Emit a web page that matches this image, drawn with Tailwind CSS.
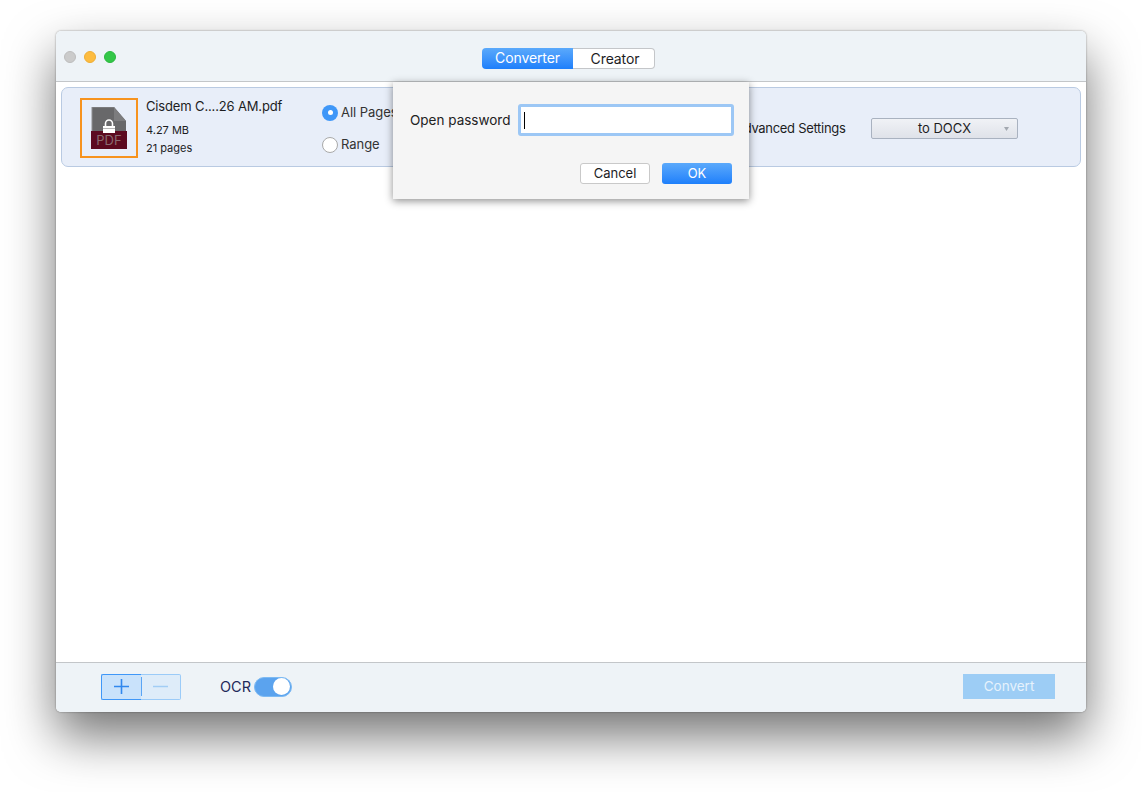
<!DOCTYPE html>
<html lang="en">
<head>
    <meta charset="UTF-8">
    <title>PDF Converter</title>
    <script src="https://cdn.jsdelivr.net/npm/@tailwindcss/browser@4"></script>
</head>
<body class="bg-white w-[1142px] h-[792px] overflow-hidden relative font-['Inter','Liberation_Sans',sans-serif] text-[#1d1d1f]">
    <!-- window -->
    <div class="absolute left-[56px] top-[31px] w-[1030px] h-[681px] flex flex-col rounded-[5px] bg-white overflow-hidden shadow-[0_24px_50px_rgba(0,0,0,0.55),0_0_2px_rgba(0,0,0,0.45)]">
        <!-- title bar -->
        <div class="h-[51px] shrink-0 bg-[#eef3f7] border-b border-[#c3c6c9] relative flex items-start justify-center pt-[17px] pr-[6px]">
            <div class="absolute left-[8px] top-[20px] flex gap-[8px]">
                <span class="w-[12px] h-[12px] rounded-full bg-[#cbcbcb] border border-[#bdbdbd]"></span>
                <span class="w-[12px] h-[12px] rounded-full bg-[#fdbc40] border border-[#eeae35]"></span>
                <span class="w-[12px] h-[12px] rounded-full bg-[#33c748] border border-[#2bb83f]"></span>
            </div>
            <div class="flex h-[21px] w-[173px] text-[14px] leading-[20px] tracking-[-0.1px]">
                <div class="w-[91px] pl-[1px] rounded-l-[4px] bg-gradient-to-b from-[#5aa9fb] to-[#1d7ffb] text-white text-center">Converter</div>
                <div class="flex-1 pl-[4px] rounded-r-[4px] bg-white border border-l-0 border-[#c4c6c9] text-center">Creator</div>
            </div>
        </div>

        <!-- file list -->
        <div class="flex-1 px-[5px] pt-[5px]">
            <div class="h-[80px] rounded-[7px] border border-[#b9cae2] bg-[#e8eef9] flex items-center pl-[18px]">
                <div class="w-[58px] h-[60px] mt-[2px] border-2 border-[#f7931e] flex items-center justify-center shrink-0">
                    <svg width="36" height="42" viewBox="0 0 36 42">
                        <path d="M1 0H23L35 14V24H1Z" fill="#68686a"/>
                        <path d="M23 0L35 14H23Z" fill="#7c7c7e"/>
                        <path d="M1 24V0H23" fill="none" stroke="#8d8d90" stroke-width="1"/>
                        <rect x="0" y="24" width="36" height="18" fill="#5c0a20"/>
                        <path d="M14.5 20V16.5a3.5 3.5 0 0 1 7 0V20" fill="none" stroke="#fff" stroke-width="1.6"/>
                        <rect x="12" y="19" width="12" height="7" fill="#fff"/>
                        <rect x="12" y="21" width="12" height="1" fill="#b5b5b5"/>
                        <text x="18" y="38" text-anchor="middle" font-size="13" fill="#8a6a70" font-family="Inter, sans-serif">PDF</text>
                    </svg>
                </div>
                <div class="w-[176px] ml-[8px] self-start pt-[9px] shrink-0">
                    <div class="text-[13px] leading-[18px] tracking-[-0.15px]">Cisdem C....26 AM.pdf</div>
                    <div class="text-[11px] leading-[14px] mt-[8px]">4.27 MB</div>
                    <div class="text-[11px] leading-[14px] mt-[4px]">21 pages</div>
                </div>
                <div class="w-[413px] shrink-0 text-[13px] text-[#333] tracking-[-0.05px] flex flex-col gap-[14px] pt-[3px]">
                    <div class="flex items-center gap-[3px] h-[18px]">
                        <span class="w-[16px] h-[16px] rounded-full bg-[#3f97f8] flex items-center justify-center"><span class="w-[5px] h-[5px] rounded-full bg-white"></span></span>
                        All Pages
                    </div>
                    <div class="flex items-center gap-[3px] h-[18px]">
                        <span class="w-[16px] h-[16px] rounded-full bg-white border border-[#a9a9a9]"></span>
                        Range
                    </div>
                </div>
                <div class="w-[136px] shrink-0 text-[13px] tracking-[-0.3px] whitespace-nowrap pt-[3px]">Advanced Settings</div>
                <div class="w-[147px] h-[21px] mt-[2px] rounded-[2px] border border-[#a9b2c0] bg-gradient-to-b from-[#f0f2f6] to-[#dfe2e9] text-[13px] leading-[19px] relative text-center">
                    to DOCX
                    <svg class="absolute right-[8px] top-[8px]" width="5" height="4" viewBox="0 0 5 4"><path d="M0 0H5L2.5 4Z" fill="#a3a8b0"/></svg>
                </div>
            </div>
        </div>

        <!-- bottom bar -->
        <div class="h-[50px] shrink-0 bg-[#eef3f7] border-t border-[#c3c6c9] flex items-center pl-[45px] pr-[31px] pb-[2px]">
            <div class="flex h-[26px] w-[80px] relative">
                <div class="w-[40px] rounded-l-[2px] border border-r-0 border-[#3f97f8] bg-[#c9e2fb] flex items-center justify-center pr-[1px]">
                    <svg width="15" height="15" viewBox="0 0 15 15"><path d="M7.5 0V15M0 7.5H15" stroke="#3188ee" stroke-width="1.6"/></svg>
                </div>
                <div class="flex-1 rounded-r-[2px] border border-l-0 border-[#9bcbf8] bg-[#deecf9] flex items-center justify-center">
                    <svg width="15" height="3" viewBox="0 0 15 3"><path d="M0 1.5H15" stroke="#a2cdf5" stroke-width="1.6"/></svg>
                </div>
                <span class="absolute left-[40px] top-[3px] w-px h-[19px] bg-[#5aa5f5]"></span>
            </div>
            <div class="ml-[39px] text-[14.5px] text-[#1e2a5a]">OCR</div>
            <div class="ml-[3px] w-[38px] h-[20px] rounded-full bg-[#5ba3ee] border border-[#7dbaf3] flex items-center justify-end pr-[1px]">
                <span class="w-[17px] h-[17px] rounded-full bg-white"></span>
            </div>
            <div class="ml-auto w-[92px] h-[25px] bg-[#9dcdf5] text-[#e6f2fc] text-[13.5px] leading-[25px] text-center">Convert</div>
        </div>
    </div>

    <!-- password sheet -->
    <div class="absolute left-[393px] top-[82px] w-[356px] h-[117px] bg-[#f5f5f5] shadow-[0_2px_8px_rgba(0,0,0,0.45)] pt-[22px] pl-[17px]">
        <div class="flex items-center">
            <span class="w-[108px] pt-[1px] shrink-0 text-[13.5px] text-[#222] whitespace-nowrap">Open password</span>
            <div class="w-[216px] h-[32px] border-[3px] border-[#9cc7f5] rounded-[3px] bg-white flex items-center pl-[3px]">
                <span class="w-px h-[17px] bg-black"></span>
            </div>
        </div>
        <div class="flex justify-end gap-[12px] mt-[27px] pr-[17px] text-[13px] leading-[19px] text-center">
            <div class="w-[70px] h-[21px] rounded-[3px] bg-white border border-[#c9c9c9]">Cancel</div>
            <div class="w-[70px] h-[21px] rounded-[3px] bg-gradient-to-b from-[#5aa9fb] to-[#1d7ffb] text-white leading-[21px]">OK</div>
        </div>
    </div>
</body>
</html>
